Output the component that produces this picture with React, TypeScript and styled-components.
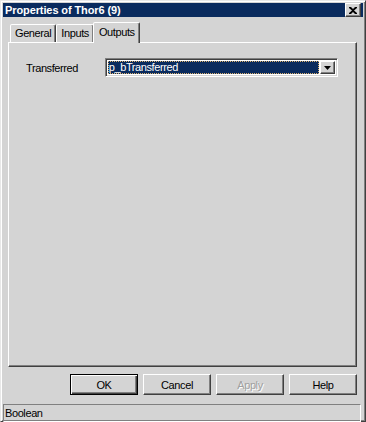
import React from "react";
import styled, { createGlobalStyle } from "styled-components";

const GlobalStyle = createGlobalStyle`
  html, body {
    margin: 0;
    padding: 0;
    background: #d4d4d4;
  }
  * {
    box-sizing: border-box;
  }
`;

const face = "#d4d4d4";
const uiFont = `"Liberation Sans", Arial, sans-serif`;

const Window = styled.div`
  width: 366px;
  height: 422px;
  display: flex;
  flex-direction: column;
  background: ${face};
  border: 1px solid;
  border-color: #e8e8e8 #404040 #404040 #e8e8e8;
  box-shadow: inset 1px 1px 0 #ffffff, inset -1px -1px 0 #808080;
  padding: 2px;
  font-family: ${uiFont};
  font-size: 11px;
  letter-spacing: -0.4px;
  color: #000;
`;

const TitleBar = styled.div`
  height: 18px;
  background: #0a2b5e;
  display: flex;
  align-items: center;
  justify-content: space-between;
  padding: 0 2px 0 2px;
`;

const Title = styled.span`
  color: #fff;
  font-weight: bold;
  font-size: 11px;
  letter-spacing: -0.1px;
`;

const CloseButton = styled.div`
  width: 16px;
  height: 14px;
  background: ${face};
  border: 1px solid;
  border-color: #ffffff #404040 #404040 #ffffff;
  box-shadow: inset -1px -1px 0 #808080;
  display: flex;
  align-items: center;
  justify-content: center;
`;

const Body = styled.div`
  flex: 1;
  display: flex;
  flex-direction: column;
  padding: 5px 6px 0 5px;
`;

const TabStrip = styled.div`
  display: flex;
  align-items: flex-end;
  height: 20px;
  padding-left: 2px;
  position: relative;
  z-index: 1;
`;

const Tab = styled.div<{ $active?: boolean }>`
  height: ${(p) => (p.$active ? "21px" : "18px")};
  margin: ${(p) => (p.$active ? "0 -2px -1px -1px" : "0")};
  padding: ${(p) => (p.$active ? "3px 4px 0 5px" : "2px 4px 0 4px")};
  background: ${face};
  border: 1px solid;
  border-bottom: none;
  border-color: #ffffff #404040 transparent #ffffff;
  border-radius: 2px 2px 0 0;
  box-shadow: inset -1px 0 0 #808080;
  white-space: nowrap;
  position: relative;
  z-index: ${(p) => (p.$active ? 2 : 1)};
`;

const Panel = styled.div`
  height: 325px;
  background: ${face};
  border: 1px solid;
  border-color: #ffffff #404040 #404040 #ffffff;
  box-shadow: inset -1px -1px 0 #808080;
  padding: 15px 18px 0 17px;
`;

const FieldRow = styled.div`
  display: flex;
  align-items: center;
`;

const FieldLabel = styled.span`
  width: 79px;
`;

const Combo = styled.div`
  width: 234px;
  height: 19px;
  background: #fff;
  border: 1px solid;
  border-color: #808080 #ffffff #ffffff #808080;
  box-shadow: inset 1px 1px 0 #404040, inset -1px -1px 0 ${face};
  padding: 2px;
  display: flex;
`;

const ComboValue = styled.div`
  flex: 1;
  background: #0a2b5e;
  color: #fff;
  outline: 1px dotted #d8b070;
  outline-offset: -1px;
  padding-left: 1px;
  line-height: 13px;
`;

const ComboButton = styled.div`
  width: 15px;
  height: 13px;
  margin-left: 1px;
  background: ${face};
  border: 1px solid;
  border-color: #ffffff #404040 #404040 #ffffff;
  box-shadow: inset -1px -1px 0 #808080;
  display: flex;
  align-items: center;
  justify-content: center;
`;

const ButtonRow = styled.div`
  display: flex;
  justify-content: flex-end;
  gap: 5px;
  margin-top: 7px;
`;

const Button = styled.div<{ $default?: boolean; $disabled?: boolean }>`
  width: 68px;
  height: 21px;
  display: flex;
  align-items: center;
  justify-content: center;
  background: ${face};
  border: 1px solid;
  border-color: ${(p) =>
    p.$default ? "#000" : "#ffffff #404040 #404040 #ffffff"};
  box-shadow: ${(p) =>
    p.$default
      ? "inset 1px 1px 0 #ffffff, inset -1px -1px 0 #404040, inset -2px -2px 0 #808080"
      : "inset -1px -1px 0 #808080"};
  color: ${(p) => (p.$disabled ? "#a0a0a0" : "#000")};
  text-shadow: ${(p) => (p.$disabled ? "1px 1px 0 #ffffff" : "none")};
`;

const StatusBar = styled.div`
  height: 18px;
  margin: 9px -4px 0 -5px;
  border: 1px solid;
  border-color: #808080 #ffffff #ffffff #808080;
  padding-left: 1px;
  display: flex;
  align-items: center;
`;

const CloseIcon = () => (
  <svg width="8" height="7" viewBox="0 0 8 7">
    <path d="M0 0h2l2 2 2-2h2v1L5 3.5 8 6v1H6L4 5 2 7H0V6l3-2.5L0 1z" fill="#000" />
  </svg>
);

const ArrowIcon = () => (
  <svg width="7" height="4" viewBox="0 0 7 4">
    <path d="M0 0h7L3.5 4z" fill="#000" />
  </svg>
);

const tabs = ["General", "Inputs", "Outputs"];
const buttons = ["OK", "Cancel", "Apply", "Help"];

export default function App() {
  return (
    <>
      <GlobalStyle />
      <Window>
        <TitleBar>
          <Title>Properties of Thor6 (9)</Title>
          <CloseButton>
            <CloseIcon />
          </CloseButton>
        </TitleBar>
        <Body>
          <TabStrip>
            {tabs.map((t) => (
              <Tab key={t} $active={t === "Outputs"}>
                {t}
              </Tab>
            ))}
          </TabStrip>
          <Panel>
            <FieldRow>
              <FieldLabel>Transferred</FieldLabel>
              <Combo>
                <ComboValue>p_bTransferred</ComboValue>
                <ComboButton>
                  <ArrowIcon />
                </ComboButton>
              </Combo>
            </FieldRow>
          </Panel>
          <ButtonRow>
            {buttons.map((b) => (
              <Button key={b} $default={b === "OK"} $disabled={b === "Apply"}>
                {b}
              </Button>
            ))}
          </ButtonRow>
          <StatusBar>Boolean</StatusBar>
        </Body>
      </Window>
    </>
  );
}
